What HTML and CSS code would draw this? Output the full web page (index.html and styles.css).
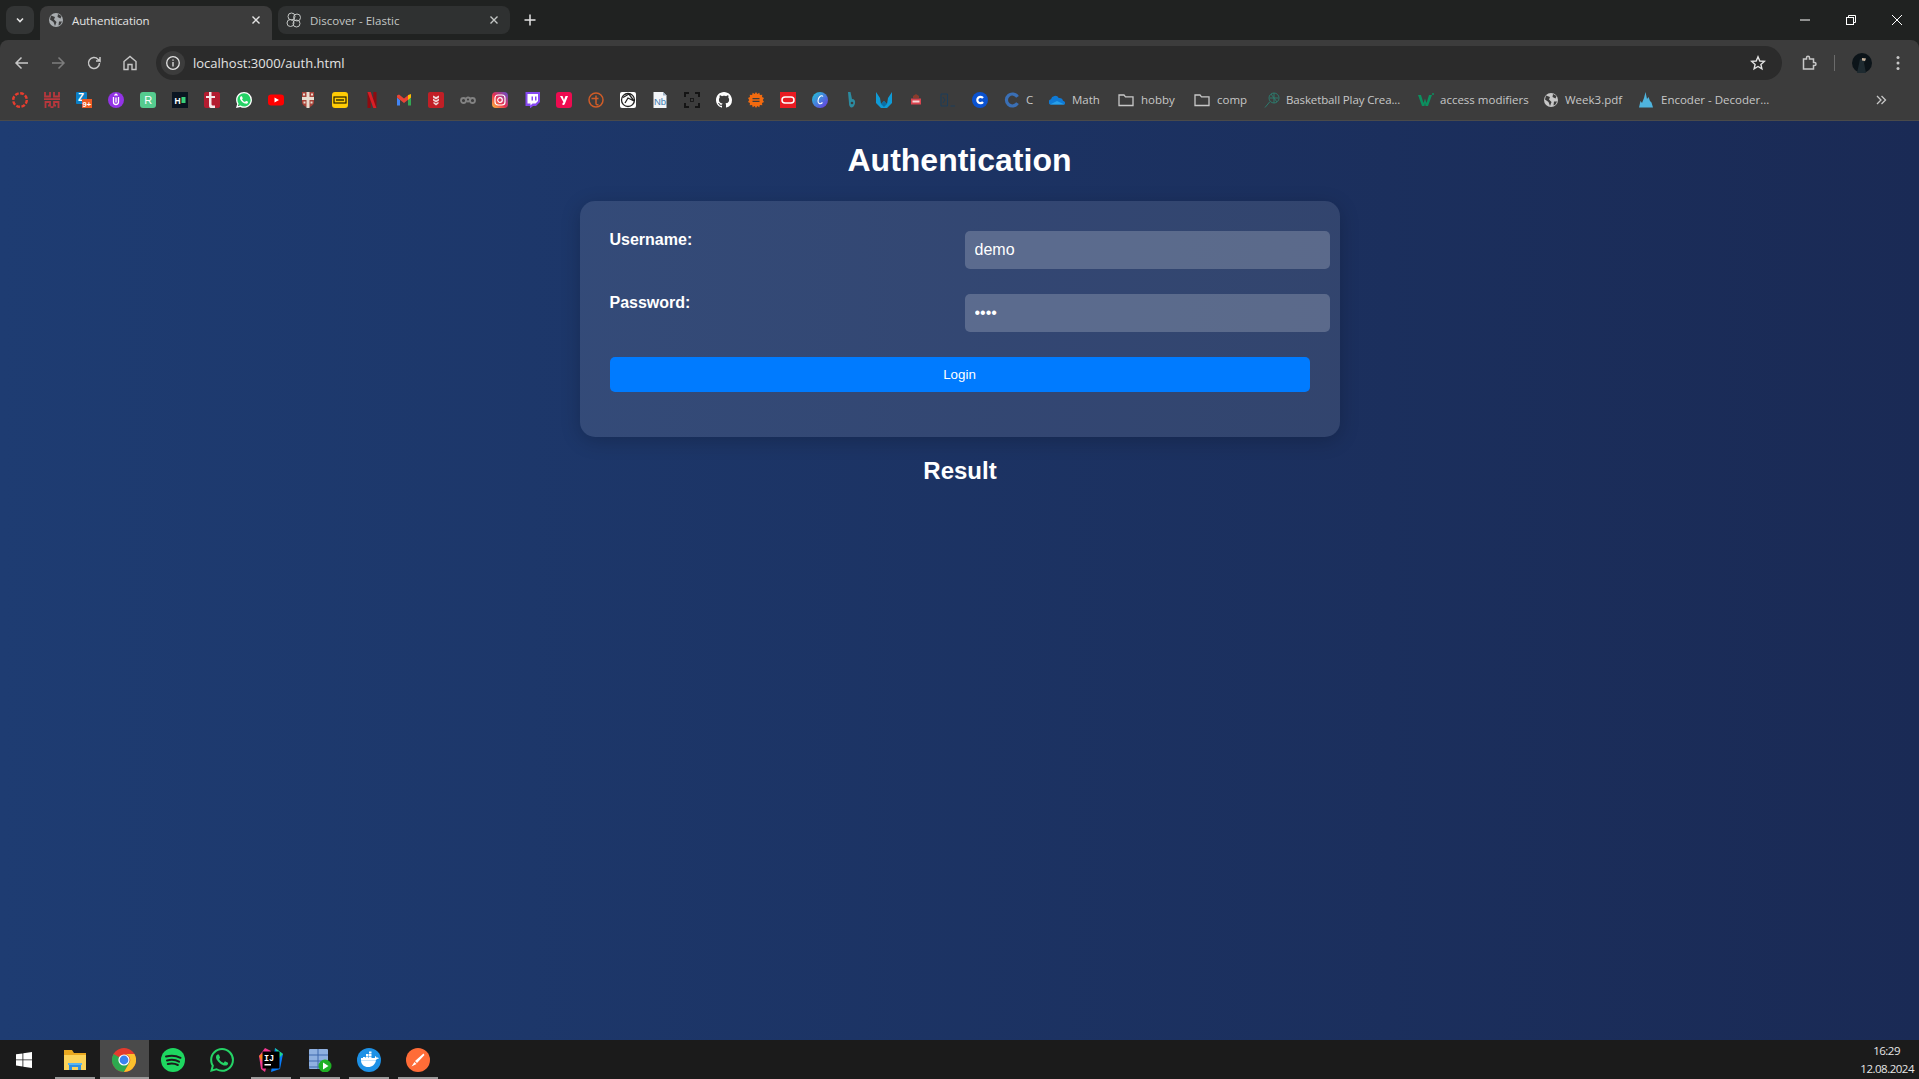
FILE: index.html
```html
<!DOCTYPE html>
<html lang="en">
<head>
<meta charset="utf-8">
<title>Authentication</title>
<link rel="stylesheet" href="styles.css">
</head>
<body>
<div class="screen">
  <header class="browser">
    <div class="tabstrip">
      <button class="tabmenu"><svg class="i10" viewBox="0 0 10 10"><path d="M2 3.500 5 6.500 8 3.500" fill="none" stroke="#e3e3e3" stroke-width="1.600"/></svg></button>
      <div class="tab tab-active">
        <svg class="ic" viewBox="0 0 16 16"><circle cx="8" cy="8" r="7" fill="#a9adb0"/><path d="M3 3.500 7 5 6 7.500 8.500 10 7 14 5.500 10 2 7.500ZM10 2l3.500 2-1 2.500-3-1.500ZM11 9.500h3l-1.500 3-2 1Z" fill="#3c3c3c"/></svg>
        <span class="tabtitle tabtitle-active">Authentication</span>
        <svg class="i10 tabclose" viewBox="0 0 10 10"><path d="M1.500 1.500 8.500 8.500M8.500 1.500 1.500 8.500" stroke="#e3e3e3" stroke-width="1.400"/></svg>
      </div>
      <div class="tab tab-idle">
        <svg class="ic" viewBox="0 0 16 16" fill="none" stroke="#c4c7c5" stroke-width="1"><circle cx="5.500" cy="4.500" r="3.500"/><circle cx="11" cy="5.500" r="3.500"/><circle cx="4.500" cy="11" r="3.500"/><circle cx="10.500" cy="11.500" r="3.500"/></svg>
        <span class="tabtitle">Discover - Elastic</span>
        <svg class="i10 tabclose" viewBox="0 0 10 10"><path d="M1.500 1.500 8.500 8.500M8.500 1.500 1.500 8.500" stroke="#c4c7c5" stroke-width="1.400"/></svg>
      </div>
      <svg class="newtab" viewBox="0 0 12 12"><path d="M6 .5v11M.5 6h11" stroke="#e3e3e3" stroke-width="1.500"/></svg>
      <div class="winctl">
        <svg class="winbtn" viewBox="0 0 12 12"><path d="M1 6h10" stroke="#fff"/></svg>
        <svg class="winbtn" viewBox="0 0 12 12" fill="none" stroke="#fff"><rect x="1.500" y="3.500" width="7" height="7"/><path d="M3.500 3.500v-2h7v7h-2"/></svg>
        <svg class="winbtn" viewBox="0 0 12 12"><path d="M1 1 11 11M11 1 1 11" stroke="#fff"/></svg>
      </div>
    </div>
    <div class="toolbar">
      <div class="navs">
        <svg class="navi" viewBox="0 0 16 16" fill="none" stroke="#c7c7c7" stroke-width="1.500"><path d="M14 8H2.500M7.500 2.500 2 8l5.500 5.500"/></svg>
        <svg class="navi" viewBox="0 0 16 16" fill="none" stroke="#7d7d7d" stroke-width="1.500"><path d="M2 8h11.500M8.500 2.500 14 8l-5.500 5.500"/></svg>
        <svg class="navi" viewBox="0 0 16 16" fill="none" stroke="#c7c7c7" stroke-width="1.500"><path d="M13.500 8A5.500 5.500 0 1 1 12 4.200L14 6V2M14 6h-4"/></svg>
        <svg class="navi" viewBox="0 0 16 16" fill="none" stroke="#c7c7c7" stroke-width="1.400"><path d="M2 14.500V6.500L8 1.500l6 5v8h-4V9.500H6v5Z"/></svg>
      </div>
      <div class="omnibox">
        <span class="infochip"><svg class="ic" viewBox="0 0 16 16" fill="none" stroke="#e3e3e3" stroke-width="1.300"><circle cx="8" cy="8" r="6.300"/><path d="M8 7v4.500M8 4.500v1.300"/></svg></span>
        <span class="url">localhost:3000/auth.html</span>
        <svg class="star" viewBox="0 0 16 16" fill="none" stroke="#e3e3e3" stroke-width="1.400"><path d="M8 1.800 9.800 6l4.500.4-3.400 3 1 4.400L8 11.500l-3.900 2.300 1-4.400-3.400-3L6.200 6Z"/></svg>
      </div>
      <svg class="navi ext" viewBox="0 0 16 16" fill="none" stroke="#c7c7c7" stroke-width="1.500"><path d="M2.500 4h3V2.800a1.500 1.500 0 0 1 3 0V4h4v3.500h1a1.500 1.500 0 0 1 0 3h-1V14h-10Z"/></svg>
      <span class="divider"></span>
      <svg class="avatar" viewBox="0 0 20 20"><circle cx="10" cy="10" r="10" fill="#0c1419"/><path d="M8 6l6-1-1 3-1 2 2 10H5l2-9Z" fill="#1e2a30"/><path d="M10 5l4 .5-1 2.500-3-.5Z" fill="#c9b39c"/></svg>
      <svg class="dots" viewBox="0 0 4 16"><circle cx="2" cy="2.500" r="1.500" fill="#c7c7c7"/><circle cx="2" cy="8" r="1.500" fill="#c7c7c7"/><circle cx="2" cy="13.500" r="1.500" fill="#c7c7c7"/></svg>
    </div>
    <nav class="bookmarks">
      <span class="fav"><svg class="ic" viewBox="0 0 16 16"><circle cx="8" cy="8" r="6.800" fill="none" stroke="#e53d2f" stroke-width="2.400" stroke-dasharray="3.800 1.540"/></svg></span>
      <span class="fav"><svg class="ic" viewBox="0 0 16 16" fill="none" stroke="#b8373c" stroke-width="1.800"><path d="M1 0v4.500h5V0M10 0v4.500h5V0M0 7.200h16M1.500 16V10H6v3.500H4M14.500 16V10H10v3.500h2M6.500 15.200h3"/></svg></span>
      <span class="fav"><svg class="ic" viewBox="0 0 16 16"><rect width="11" height="12" fill="#0b7fc7" rx="1"/><text class="glyph glyph-w" x="2" y="9" font-size="10">Z</text><rect x="6" y="7" width="10" height="9" fill="#ee5a24"/><text class="glyph glyph-w" x="6.500" y="14.500" font-size="7.500">9+</text></svg></span>
      <span class="fav"><svg class="ic" viewBox="0 0 16 16"><circle cx="8" cy="8" r="8" fill="#9333e6"/><path d="M5.500 5v5a2.500 2.500 0 0 0 5 0V5M6.500 3.500 8 2.200l1.500 1.300M8 5.500v5" fill="none" stroke="#fff" stroke-width="1.300"/></svg></span>
      <span class="fav"><svg class="ic" viewBox="0 0 16 16"><rect width="16" height="16" rx="3" fill="#55cb8f"/><text class="glyph glyph-w glyph-thin" x="4.200" y="12" font-size="11">R</text></svg></span>
      <span class="fav"><svg class="ic" viewBox="0 0 16 16"><rect width="16" height="16" fill="#0a1521"/><text class="glyph glyph-w" x="2.500" y="11.500" font-size="8.500">H</text><rect x="9.500" y="5" width="4" height="6" fill="#3ad07a"/></svg></span>
      <span class="fav"><svg class="ic" viewBox="0 0 16 16"><rect width="16" height="16" rx="2" fill="#b31c30"/><path d="M5 0h2.500v4H11v2H7.500v6c0 1.500 1 1.800 3.500 1.500V16H7c-1.500 0-2-1-2-3V6H2V4h3Z" fill="#f4e8ea"/></svg></span>
      <span class="fav"><svg class="ic" viewBox="0 0 24 24"><circle cx="12" cy="12" r="11" fill="#25d366"/><path fill="#fff" d="M17.472 14.382c-.297-.149-1.758-.867-2.030-.967-.273-.099-.471-.148-.670.150-.197.297-.767.966-.940 1.164-.173.199-.347.223-.644.075-.297-.150-1.255-.463-2.390-1.475-.883-.788-1.480-1.761-1.653-2.059-.173-.297-.018-.458.130-.606.134-.133.298-.347.446-.520.149-.174.198-.298.298-.497.099-.198.050-.371-.025-.520-.075-.149-.669-1.612-.916-2.207-.242-.579-.487-.500-.669-.510-.173-.008-.371-.010-.570-.010-.198 0-.520.074-.792.372-.272.297-1.040 1.016-1.040 2.479 0 1.462 1.065 2.875 1.213 3.074.149.198 2.096 3.200 5.077 4.487.709.306 1.262.489 1.694.625.712.227 1.360.195 1.871.118.571-.085 1.758-.719 2.006-1.413.248-.694.248-1.289.173-1.413-.074-.124-.272-.198-.570-.347m-5.421 7.403h-.004a9.870 9.870 0 01-5.031-1.378l-.361-.214-3.741.982.998-3.648-.235-.374a9.860 9.860 0 01-1.510-5.260c.001-5.450 4.436-9.884 9.888-9.884 2.640 0 5.122 1.030 6.988 2.898a9.825 9.825 0 012.893 6.994c-.003 5.450-4.437 9.884-9.885 9.884m8.413-18.297A11.815 11.815 0 0012.050 0C5.495 0 .160 5.335.157 11.892c0 2.096.547 4.142 1.588 5.945L.057 24l6.305-1.654a11.882 11.882 0 005.683 1.448h.005c6.554 0 11.890-5.335 11.893-11.893a11.821 11.821 0 00-3.480-8.413z"/></svg></span>
      <span class="fav"><svg class="ic" viewBox="0 0 16 16"><rect y="2.500" width="16" height="11" rx="3" fill="#f00"/><path d="M6.500 5.500v5L11 8Z" fill="#fff"/></svg></span>
      <span class="fav"><svg class="ic" viewBox="0 0 16 16"><path d="M2 0h12v10c0 3-3 4.500-6 6-3-1.500-6-3-6-6Z" fill="#a8433a"/><path d="M6.500 0h3v16h-3ZM2 5h12v3H2Z" fill="#e8ddd0"/><path d="M3 1.500h2v2H3ZM11 1.500h2v2h-2ZM3.500 9.500h2v2h-2ZM10.500 9.500h2v2h-2Z" fill="#e8ddd0"/></svg></span>
      <span class="fav"><svg class="ic" viewBox="0 0 16 16"><rect width="16" height="16" rx="3" fill="#ffcb05"/><rect x="2" y="5" width="12" height="6" fill="none" stroke="#231f00" stroke-width="1.200"/><path d="M4 7h8v2H4Z" fill="#6b5a00"/></svg></span>
      <span class="fav"><svg class="ic" viewBox="0 0 16 16"><path d="M3.500 0h3.200v16l-3.200.4Z" fill="#8e0b10"/><path d="M9.300 0h3.200v16.400l-3.200-.4Z" fill="#8e0b10"/><path d="M3.500 0h3.200l5.800 16.400-3.200-.4Z" fill="#d81f26"/></svg></span>
      <span class="fav"><svg class="ic" viewBox="0 0 16 16"><path d="M1 13.500h3V8L1 5.500Z" fill="#4285f4"/><path d="M12 13.500h3V5.500L12 8Z" fill="#34a853"/><path d="M1 3.500v2l7 5.500 7-5.500v-2L13 2.500 8 6.500 3 2.500Z" fill="#ea4335"/><path d="M12 3.300 15 2v3.500L12 8Z" fill="#fbbc04"/></svg></span>
      <span class="fav"><svg class="ic" viewBox="0 0 16 16"><rect width="16" height="16" rx="2" fill="#c11f26"/><path d="M8 2.500v11M8 5 5 3.500v2L8 7.500l3-2v-2ZM8 8.500 5 6.500v2l3 2 3-2v-2ZM8 11.500l-2.500-1.700v1.700L8 13.500l2.500-2v-1.700Z" fill="#f1d9d9"/></svg></span>
      <span class="fav"><svg class="ic" viewBox="0 0 16 16" fill="none" stroke="#828282" stroke-width="1.800"><circle cx="3.500" cy="8.500" r="2.500"/><circle cx="12.500" cy="8.500" r="2.500"/><circle cx="8" cy="7.500" r="2"/></svg></span>
      <span class="fav"><svg class="ic" viewBox="0 0 16 16"><defs><linearGradient id="ig" x1="0" y1="1" x2="1" y2="0"><stop offset="0" stop-color="#fdc13c"/><stop offset=".45" stop-color="#e8314f"/><stop offset="1" stop-color="#5c4fd0"/></linearGradient></defs><rect width="16" height="16" rx="4" fill="url(#ig)"/><rect x="3" y="3" width="10" height="10" rx="3" fill="none" stroke="#fff" stroke-width="1.200"/><circle cx="8" cy="8" r="2.300" fill="none" stroke="#fff" stroke-width="1.200"/></svg></span>
      <span class="fav"><svg class="ic" viewBox="0 0 16 16"><path d="M1.500 0H16v10l-4 4H9l-3 2.500V14H1.500Z" fill="#8548f0"/><path d="M3.500 2H14v7l-2.500 2.500H8.500L6.500 13.500v-2h-3Z" fill="#fff"/><path d="M7.500 4.500H9v4H7.500ZM11 4.500h1.500v4H11Z" fill="#8548f0"/></svg></span>
      <span class="fav"><svg class="ic" viewBox="0 0 16 16"><rect width="16" height="16" rx="3" fill="#ee0b50"/><path d="M4 4h2.500L8 8l1.500-4H12L9 11.500c-.4 1-1 1.500-2.500 1.500v-2c.5 0 .9-.2 1-.8Z" fill="#fff"/></svg></span>
      <span class="fav"><svg class="ic" viewBox="0 0 16 16" fill="none" stroke="#cf5c28" stroke-width="1.500"><circle cx="8" cy="8" r="7"/><path d="M3.500 6.500h7M8 3.500v8c0 1 .8 1.500 2.500 1"/></svg></span>
      <span class="fav"><svg class="ic" viewBox="0 0 16 16"><rect width="16" height="16" rx="2" fill="#fff"/><circle cx="8" cy="8" r="6.500" fill="none" stroke="#222" stroke-width="1.300"/><path d="M3 5.500 9 2 14 9 8 6 5 11" fill="none" stroke="#222" stroke-width="1.300"/></svg></span>
      <span class="fav"><svg class="ic" viewBox="0 0 16 16"><path d="M1.500 0H11l3.500 3.500V16h-13Z" fill="#f2f5f8"/><path d="M11 0l3.500 3.500H11Z" fill="#9fb4c7"/><text class="glyph glyph-b" x="2" y="13" font-size="9.500">Nb</text></svg></span>
      <span class="fav"><svg class="ic" viewBox="0 0 16 16" fill="none" stroke="#141414" stroke-width="2"><path d="M1 5V1h4M11 1h4v4M15 11v4h-4M5 15H1v-4"/><rect x="6.500" y="6.500" width="3" height="3" stroke-width=".8"/></svg></span>
      <span class="fav"><svg class="ic" viewBox="0 0 16 16"><path fill="#fff" d="M8 0C3.580 0 0 3.580 0 8c0 3.540 2.290 6.530 5.470 7.590.4.070.55-.17.55-.38 0-.19-.01-.82-.01-1.490-2.010.37-2.530-.49-2.690-.94-.09-.23-.48-.94-.82-1.130-.28-.15-.68-.52-.01-.53.63-.01 1.080.58 1.230.82.72 1.210 1.870.87 2.330.66.070-.52.280-.87.510-1.070-1.780-.2-3.640-.89-3.640-3.950 0-.87.31-1.590.82-2.150-.08-.2-.36-1.020.08-2.120 0 0 .67-.21 2.200.82.640-.18 1.320-.27 2-.27.680 0 1.360.09 2 .27 1.530-1.040 2.200-.82 2.200-.82.44 1.100.16 1.920.08 2.120.51.56.82 1.270.82 2.150 0 3.070-1.870 3.750-3.650 3.950.29.25.54.73.54 1.480 0 1.070-.01 1.930-.01 2.200 0 .21.15.46.55.38A8.013 8.013 0 0016 8c0-4.420-3.580-8-8-8z"/></svg></span>
      <span class="fav"><svg class="ic" viewBox="0 0 16 16"><path d="M8 0l1.300 2 2-1.300.6 2.300 2.400-.3-.3 2.400 2 .9-1.200 2 1.200 2-2 .9.300 2.400-2.400-.3-.6 2.300-2-1.300L8 16l-1.300-2-2 1.300-.6-2.300-2.400.3.3-2.400-2-.9 1.200-2L0 6l2-.9-.3-2.400 2.400.3.6-2.300 2 1.300Z" fill="#f26a0f"/><path d="M4.500 6h7v1.300h-7ZM4.500 8.700h7V10h-7Z" fill="#3c3c3c"/></svg></span>
      <span class="fav"><svg class="ic" viewBox="0 0 16 16"><rect width="16" height="16" fill="#ea1b22"/><rect x="2" y="5" width="12" height="6" rx="3" fill="none" stroke="#fff" stroke-width="1.500"/></svg></span>
      <span class="fav"><svg class="ic" viewBox="0 0 16 16"><defs><linearGradient id="cv" x1="0" y1="0" x2="1" y2="1"><stop offset="0" stop-color="#1fc8d8"/><stop offset="1" stop-color="#6d35e0"/></linearGradient></defs><circle cx="8" cy="8" r="8" fill="url(#cv)"/><path d="M11 4.500C9.500 2.500 6 5 6 9c0 3 2.500 3.500 4.500 1.500" fill="none" stroke="#fff" stroke-width="1.100"/></svg></span>
      <span class="fav"><svg class="ic" viewBox="0 0 16 16"><path d="M4 0h2.500l1.500 7c2.500 0 3.500 2 3 4.500S8.500 16 7 15.500 5 13 5 11Z" fill="#2c8ba0"/><circle cx="8" cy="11" r="1.300" fill="#3c3c3c"/></svg></span>
      <span class="fav"><svg class="ic" viewBox="0 0 16 16"><path d="M0 0l4 6 1 6L8 9l3 3 1-6 4-6v11l-5 5H5l-5-5Z" fill="#0f9bd7"/><path d="M5 12l3-3 3 3-3 3Z" fill="#0b6fa5"/></svg></span>
      <span class="fav"><svg class="ic" viewBox="0 0 16 16"><path d="M5 4l3-2 3 2v2H5Z" fill="#8a3b2c"/><rect x="3" y="6.500" width="10" height="6" fill="#d9434e"/><rect x="4.500" y="8.500" width="7" height="2" fill="#f5d6d6"/></svg></span>
      <span class="fav"><svg class="ic" viewBox="0 0 16 16" fill="none" stroke="#1c3c58" stroke-width="1"><path d="M1 2h6.500v12H1ZM10.500 14H15M3 5l2 3-2 3"/></svg></span>
      <span class="fav"><svg class="ic" viewBox="0 0 16 16"><circle cx="8" cy="8" r="8" fill="#0a52d0"/><path d="M11 6a3.200 3.200 0 1 0 0 4" fill="none" stroke="#fff" stroke-width="2.200"/></svg></span>
      <a class="mark mark-c"><svg class="ic" viewBox="0 0 16 16"><path d="M13.500 4.800a6 6 0 1 0 0 6.400" fill="none" stroke="#3a6fb5" stroke-width="3.200"/></svg><span>C</span></a>
      <a class="mark mark-math"><svg class="ic" viewBox="0 0 16 16"><path d="M1 12.500a2.800 2.800 0 0 1 1-5.200A4.200 4.200 0 0 1 9.800 6a3.400 3.400 0 0 1 4.200 2.800 2.200 2.200 0 0 1 1.500 3.700Z" fill="#0f7ad6"/><path d="M1 12.500 8 9l7.500 3.500Z" fill="#27a0ea"/></svg><span>Math</span></a>
      <a class="mark mark-hobby"><svg class="ic" viewBox="0 0 16 16" fill="none" stroke="#c7c7c7" stroke-width="1.300"><path d="M1 3h5l1.500 1.800H15V13.500H1Z"/></svg><span>hobby</span></a>
      <a class="mark mark-comp"><svg class="ic" viewBox="0 0 16 16" fill="none" stroke="#c7c7c7" stroke-width="1.300"><path d="M1 3h5l1.500 1.800H15V13.500H1Z"/></svg><span>comp</span></a>
      <a class="mark mark-bball"><svg class="ic" viewBox="0 0 16 16" fill="none" stroke="#2d7a6d" stroke-width="1"><circle cx="10" cy="6" r="5"/><path d="M7 2 13 10M6 6h8M10 1v10M6 9.500 1 15.500"/></svg><span>Basketball Play Crea...</span></a>
      <a class="mark mark-access"><svg class="ic" viewBox="0 0 16 16"><path d="M0 3h3l2.500 8L7 6.500 8.500 11 11 3h3l-4 11H7.500L7 11 6.500 14H4Z" fill="#0c8f5f"/><circle cx="15" cy="2" r="1" fill="#0c8f5f"/></svg><span>access modifiers</span></a>
      <a class="mark mark-week"><svg class="ic" viewBox="0 0 16 16"><circle cx="8" cy="8" r="7" fill="#c7c7c7"/><path d="M3 3.500 7 5 6 7.500 8.500 10 7 14 5.500 10 2 7.500ZM10 2l3.500 2-1 2.500-3-1.500ZM11 9.500h3l-1.500 3-2 1Z" fill="#3c3c3c"/></svg><span>Week3.pdf</span></a>
      <a class="mark mark-enc"><svg class="ic" viewBox="0 0 16 16"><path d="M1 15.500 2.500 9 4 11 6 6 7.500 0 9 7l1.500-2L12 9l1.500 1.500 1.500 5Z" fill="#4fb4de"/></svg><span>Encoder - Decoder...</span></a>
      <svg class="more" viewBox="0 0 12 12" fill="none" stroke="#c7c7c7" stroke-width="1.300"><path d="M2 2 6 6 2 10M6.500 2l4 4-4 4"/></svg>
    </nav>
  </header>

  <main class="page">
    <h1>Authentication</h1>
    <form class="card">
      <label for="u">Username:</label>
      <input id="u" type="text" value="demo">
      <label for="p">Password:</label>
      <input id="p" type="password" value="demo">
      <button class="login" type="button">Login</button>
    </form>
    <h2>Result</h2>
  </main>

  <footer class="taskbar">
    <span class="tb tb-start"><svg class="tbi-start" viewBox="0 0 16 16" fill="#fff"><path d="M0 2.300 6.500 1.400V7.500H0ZM7.300 1.300 16 0V7.500H7.300ZM0 8.300H6.500V14.500L0 13.600ZM7.300 8.300H16V16L7.300 14.700Z"/></svg></span>
    <span class="tb tb-open"><svg class="tbi" viewBox="0 0 24 24"><path d="M1 2h8l2 3h12v17H1Z" fill="#e9a820"/><path d="M1 7h22v15H1Z" fill="#fbd35a"/><path d="M6 16h12v6h-3v-3H9v3H6Z" fill="#2f8fe0"/><path d="M5 15h14v2H5Z" fill="#59b4f0"/></svg></span>
    <span class="tb tb-active"><svg class="tbi" viewBox="0 0 24 24"><circle cx="12" cy="12" r="12" fill="#e33b2e"/><path d="M12 12 1.600 6A12 12 0 0 0 12 24l6-10.400Z" fill="#2da94f"/><path d="M12 6h10.400A12 12 0 0 1 12 24l6-10.400A6 6 0 0 0 12 6Z" fill="#fbc02d"/><circle cx="12" cy="12" r="5.600" fill="#fff"/><circle cx="12" cy="12" r="4.400" fill="#3b82f0"/></svg></span>
    <span class="tb"><svg class="tbi" viewBox="0 0 24 24"><circle cx="12" cy="12" r="12" fill="#1ed760"/><path d="M5 8.500c5-1.300 10-1 14.500 1.300M6 12.500c4-1 8.500-.8 12 1.200M6.800 16c3.500-.8 7-.6 10 1" fill="none" stroke="#1c1c1c" stroke-width="2" stroke-linecap="round"/></svg></span>
    <span class="tb"><svg class="tbi" viewBox="0 0 24 24"><path fill="#25d366" d="M17.472 14.382c-.297-.149-1.758-.867-2.030-.967-.273-.099-.471-.148-.670.150-.197.297-.767.966-.940 1.164-.173.199-.347.223-.644.075-.297-.150-1.255-.463-2.390-1.475-.883-.788-1.480-1.761-1.653-2.059-.173-.297-.018-.458.130-.606.134-.133.298-.347.446-.520.149-.174.198-.298.298-.497.099-.198.050-.371-.025-.520-.075-.149-.669-1.612-.916-2.207-.242-.579-.487-.500-.669-.510-.173-.008-.371-.010-.570-.010-.198 0-.520.074-.792.372-.272.297-1.040 1.016-1.040 2.479 0 1.462 1.065 2.875 1.213 3.074.149.198 2.096 3.200 5.077 4.487.709.306 1.262.489 1.694.625.712.227 1.360.195 1.871.118.571-.085 1.758-.719 2.006-1.413.248-.694.248-1.289.173-1.413-.074-.124-.272-.198-.570-.347m-5.421 7.403h-.004a9.870 9.870 0 01-5.031-1.378l-.361-.214-3.741.982.998-3.648-.235-.374a9.860 9.860 0 01-1.510-5.260c.001-5.450 4.436-9.884 9.888-9.884 2.640 0 5.122 1.030 6.988 2.898a9.825 9.825 0 012.893 6.994c-.003 5.450-4.437 9.884-9.885 9.884m8.413-18.297A11.815 11.815 0 0012.050 0C5.495 0 .160 5.335.157 11.892c0 2.096.547 4.142 1.588 5.945L.057 24l6.305-1.654a11.882 11.882 0 005.683 1.448h.005c6.554 0 11.890-5.335 11.893-11.893a11.821 11.821 0 00-3.480-8.413z"/></svg></span>
    <span class="tb tb-open"><svg class="tbi" viewBox="0 0 24 24"><path d="M0 8 6 0l6 3-6 21-4-3Z" fill="#f0388f"/><path d="M3 14 0 8l5-4Z" fill="#fc801d"/><path d="M16 0l8 6-3 15-9 3Z" fill="#087cfa"/><path d="M16 0l8 6-4 4Z" fill="#21d789"/><rect x="3.500" y="3.500" width="17" height="17" fill="#000"/><text class="glyph glyph-w glyph-mono" x="5" y="12.500" font-size="8.500">IJ</text><rect x="5.500" y="16" width="6.500" height="1.500" fill="#fff"/></svg></span>
    <span class="tb tb-open"><svg class="tbi" viewBox="0 0 24 24"><rect x="1" y="1" width="19" height="20" rx="1" fill="#8fb0e0"/><path d="M1 7h19M1 13h19M1 19h19M10 1v20" stroke="#3f69ad" stroke-width="1"/><circle cx="17" cy="18" r="6.500" fill="#1fb024"/><path d="M15 14.500v7l5.500-3.500Z" fill="#fff"/></svg></span>
    <span class="tb tb-open"><svg class="tbi" viewBox="0 0 24 24"><circle cx="12" cy="12" r="12" fill="#1d91e6"/><path d="M4 12.500h14c1 0 1.500-1 1.800-1.500 1 0 1.800-.2 2.200-.7-.7-.8-1.700-.8-2.400-.6-.2-1-.8-1.500-1.300-1.800-.5.7-.6 1.600-.3 2.200H4Z" fill="#fff"/><path d="M4 12.500c.2 4 3 6.500 7 6.500 4.500 0 7-2.500 8-6.500Z" fill="#fff"/><path d="M6 9h2.500v2.500H6ZM9 9h2.500v2.500H9ZM12 9h2.500v2.500H12ZM9 6h2.500v2.500H9ZM12 6h2.500v2.500H12ZM12 3.500h2.500V5.500H12Z" fill="#fff"/></svg></span>
    <span class="tb tb-open"><svg class="tbi" viewBox="0 0 24 24"><circle cx="12" cy="12" r="12" fill="#ff6c37"/><path d="M17.500 5.500 9 13l2 2 7.500-8ZM8.500 14l-3 4.500 5-2.500Z" fill="#fff"/></svg></span>
    <div class="clock"><span>16:29</span><span>12.08.2024</span></div>
  </footer>
</div>
</body>
</html>
```

FILE: styles.css
```css
* { box-sizing: border-box; }
html, body { margin: 0; height: 100%; overflow: hidden; }
body { font-family: "Liberation Sans", Arial, sans-serif; }
.screen { display: flex; flex-direction: column; height: 1079px; }

.browser { background: #202221; flex: none; font-family: "Open Sans", "Noto Sans", sans-serif; }
.ic { width: 16px; height: 16px; flex: none; display: block; }
.i10 { width: 10px; height: 10px; flex: none; display: block; }
.glyph { font-family: "Liberation Sans", sans-serif; font-weight: 700; }
.glyph-w { fill: #fff; }
.glyph-b { fill: #3f7cb0; font-weight: 400; }
.glyph-thin { font-weight: 400; }
.glyph-mono { font-family: "Liberation Mono", monospace; }

.tabstrip { display: flex; align-items: flex-start; height: 40px; padding: 6px 0 0 6px; }
.tabmenu { width: 28px; height: 28px; border: 0; border-radius: 8px; background: #333535; display: flex; align-items: center; justify-content: center; padding: 0; margin-right: 6px; }
.tab { display: flex; align-items: center; gap: 8px; width: 232px; padding: 0 11px 0 8px; font-size: 11.500px; }
.tab-active { height: 34px; background: #3c3c3c; border-radius: 8px 8px 0 0; color: #e3e3e3; padding-bottom: 6px; margin-right: 6px; }
.tab-idle { height: 28px; background: #2f3131; border-radius: 8px; color: #c4c7c5; }
.tabtitle { flex: 1; white-space: nowrap; }
.tabtitle-active { letter-spacing: -.1px; }
.newtab { width: 12px; height: 12px; margin: 8px 0 0 14px; flex: none; }
.winctl { margin-left: auto; display: flex; gap: 34px; padding: 8px 16px 0 0; }
.winbtn { width: 12px; height: 12px; display: block; }

.toolbar { display: flex; align-items: center; height: 40px; background: #3c3c3c; border-radius: 8px 8px 0 0; padding: 6px 12px 0 14px; }
.navs { display: flex; gap: 20px; }
.navi { width: 16px; height: 16px; flex: none; display: block; }
.omnibox { display: flex; align-items: center; height: 34px; width: 1626px; margin-left: 18px; background: #2b2b2b; border-radius: 17px; padding: 0 16px 0 5px; }
.infochip { width: 24px; height: 24px; border-radius: 50%; background: #3c3c3c; display: flex; align-items: center; justify-content: center; }
.url { color: #e3e3e3; font-size: 13px; margin-left: 8px; flex: 1; }
.star { width: 16px; height: 16px; display: block; }
.ext { margin-left: 19px; }
.divider { width: 1px; height: 16px; background: #6b6b6b; margin-left: 17px; }
.avatar { width: 20px; height: 20px; margin-left: 17px; display: block; }
.dots { width: 4px; height: 16px; margin-left: 24px; display: block; }

.bookmarks { display: flex; align-items: center; height: 41px; background: #3c3c3c; padding: 0 0 1px 4px; border-bottom: 1px solid #4a4a4a; color: #c7c7c7; font-size: 11.500px; }
.fav { width: 32px; display: flex; justify-content: center; flex: none; }
.mark { display: flex; align-items: center; gap: 7px; flex: none; white-space: nowrap; }
.mark-c { width: 45px; margin-left: 8px; gap: 6px; }
.mark-math { width: 69px; }
.mark-hobby { width: 76px; }
.mark-comp { width: 70px; }
.mark-bball { width: 154px; gap: 6px; letter-spacing: -.12px; }
.mark-access { width: 125px; gap: 6px; }
.mark-week { width: 95px; gap: 6px; }
.mark-enc { width: 237px; }
.more { width: 12px; height: 12px; flex: none; }

.page { flex: 1; min-height: 0; background: linear-gradient(90deg, #1e3c72, #1a2a55); color: #fff; text-align: center; display: flex; flex-direction: column; align-items: center; }
h1 { font-size: 32px; margin: 21.440px 0; }
h2 { font-size: 24px; margin: 19.920px 0 19.920px 1px; }
.card { width: 760px; height: 236px; padding: 30px; background: rgba(255, 255, 255, .1); border-radius: 15px; box-shadow: 0 4px 20px rgba(0, 0, 0, .2); display: grid; grid-template-columns: 355px 345px; grid-auto-rows: min-content; row-gap: 25px; text-align: left; }
label { font-size: 16px; font-weight: 700; }
input { box-sizing: content-box; display: block; width: 345px; height: 18px; padding: 10px; border: 0; border-radius: 5px; background: rgba(255, 255, 255, .2); color: #fff; font: 16px "Liberation Sans", sans-serif; outline: 0; }
.login { grid-column: 1 / -1; height: 35px; border: 0; border-radius: 5px; background: #007bff; color: #fff; font: 13.333px "Liberation Sans", sans-serif; }

.taskbar { flex: none; height: 39px; background: #1b1b1b; display: flex; align-items: stretch; }
.tb { display: flex; align-items: center; justify-content: center; flex: none; width: 49px; }
.tb-start { width: 50.500px; padding-right: 2.500px; }
.tb-open { background: linear-gradient(#9a9a9a, #9a9a9a) center bottom / 40px 2px no-repeat; }
.tb-active { background: #4a4a4a; border-bottom: 2px solid #9a9a9a; padding-top: 2px; }
.tbi { width: 24px; height: 24px; display: block; }
.tbi-start { width: 16px; height: 16px; display: block; }
.clock { margin-left: auto; display: flex; flex-direction: column; align-items: flex-end; justify-content: center; gap: 3px; padding: 0 5px; color: #e6e6e6; font: 11.500px/15px "Open Sans", sans-serif; letter-spacing: -.5px; }
.clock span:first-child { margin-right: 14px; }
```
